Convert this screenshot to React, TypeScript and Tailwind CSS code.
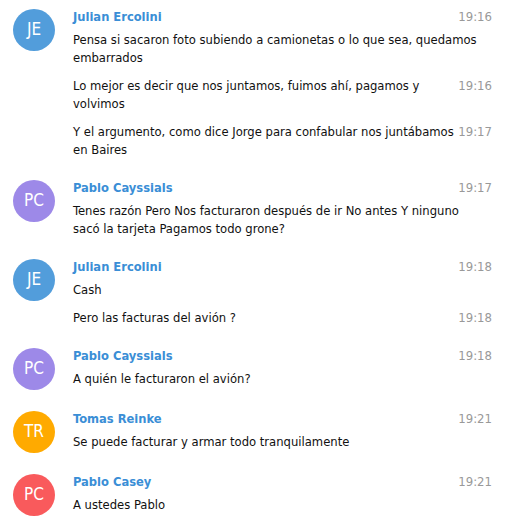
import React from "react";

type Msg = { text: string; time: string };
type Group = { name: string; initials: string; color: string; time: string; msgs: Msg[] };

const groups: Group[] = [
  {
    name: "Julian Ercolini",
    initials: "JE",
    color: "bg-[#529ddb]",
    time: "19:16",
    msgs: [
      { text: "Pensa si sacaron foto subiendo a camionetas o lo que sea, quedamos embarrados", time: "" },
      { text: "Lo mejor es decir que nos juntamos, fuimos ahí, pagamos y volvimos", time: "19:16" },
      { text: "Y el argumento, como dice Jorge para confabular nos juntábamos en Baires", time: "19:17" },
    ],
  },
  {
    name: "Pablo Cayssials",
    initials: "PC",
    color: "bg-[#9d89e8]",
    time: "19:17",
    msgs: [{ text: "Tenes razón Pero Nos facturaron después de ir No antes Y ninguno sacó la tarjeta Pagamos todo grone?", time: "" }],
  },
  {
    name: "Julian Ercolini",
    initials: "JE",
    color: "bg-[#529ddb]",
    time: "19:18",
    msgs: [
      { text: "Cash", time: "" },
      { text: "Pero las facturas del avión ?", time: "19:18" },
    ],
  },
  {
    name: "Pablo Cayssials",
    initials: "PC",
    color: "bg-[#9d89e8]",
    time: "19:18",
    msgs: [{ text: "A quién le facturaron el avión?", time: "" }],
  },
  {
    name: "Tomas Reinke",
    initials: "TR",
    color: "bg-[#ffaa00]",
    time: "19:21",
    msgs: [{ text: "Se puede facturar y armar todo tranquilamente", time: "" }],
  },
  {
    name: "Pablo Casey",
    initials: "PC",
    color: "bg-[#f95a5c]",
    time: "19:21",
    msgs: [{ text: "A ustedes Pablo", time: "" }],
  },
];

export default function App() {
  return (
    <div
      className="w-[513px] h-[523px] bg-white overflow-hidden pl-[13px] pr-[21px] pt-[8px] flex flex-col gap-[20px]"
      style={{ fontFamily: '"DejaVu Sans Condensed", "DejaVu Sans", sans-serif' }}
    >
      {groups.map((g, i) => (
        <div key={i} className="flex gap-[18px]">
          <div
            className={`${g.color} w-[42px] h-[42px] rounded-full shrink-0 mt-[1px] flex items-center justify-center text-white text-[17px]`}
          >
            {g.initials}
          </div>
          <div className="flex-1 min-w-0">
            <div className="flex justify-between h-[18px] leading-[18px]">
              <span className="font-bold text-[12.8px] text-[#3a8ed6]">{g.name}</span>
              <span className="text-[13px] text-[#999999]">{g.time}</span>
            </div>
            <div className="mt-[5px] flex flex-col gap-[10px]">
              {g.msgs.map((m, j) => (
                <div key={j} className="pr-[6px] text-[12.9px] leading-[18px] text-[#111111]">
                  {m.time && (
                    <span className="float-right ml-[3px] mr-[-6px] text-[13px] text-[#999999]">{m.time}</span>
                  )}
                  {m.text}
                </div>
              ))}
            </div>
          </div>
        </div>
      ))}
    </div>
  );
}
